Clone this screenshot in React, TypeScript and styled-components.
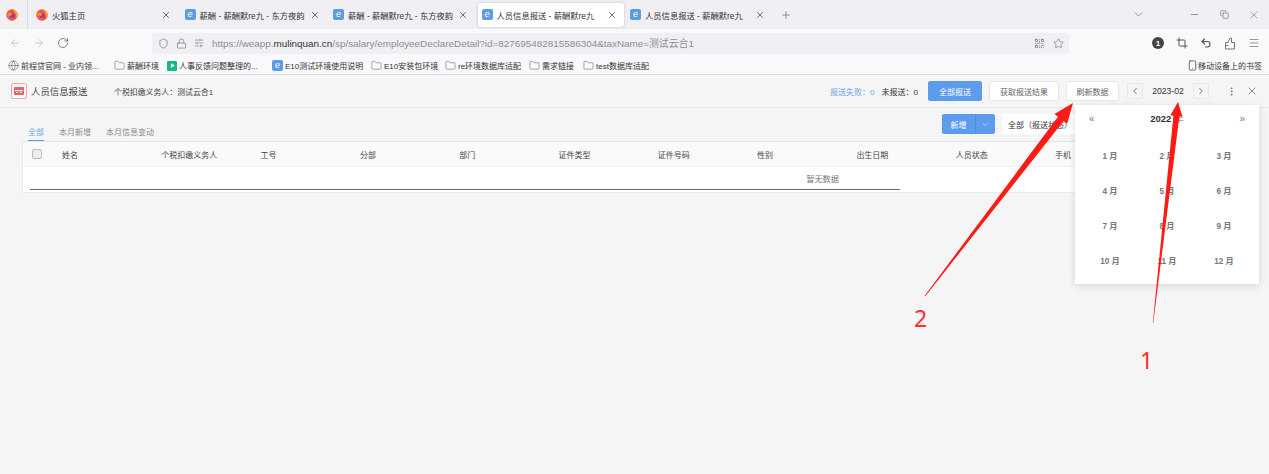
import React from "react";
import styled, { createGlobalStyle } from "styled-components";
import {
  ArrowLeft, ArrowRight, RotateCw, Shield, Lock, SlidersHorizontal, QrCode, Star,
  Crop, Undo2, Menu, Minus, X, Plus, ChevronDown, ChevronLeft, ChevronRight,
  Copy, Globe, Folder, Smartphone, MoreVertical, Play,
} from "lucide-react";

const Global = createGlobalStyle`
  html, body { margin: 0; padding: 0; background: #f5f5f5; }
  * { box-sizing: border-box; }
  body { font-family: "Liberation Sans", "Noto Sans CJK SC", sans-serif; }
`;

const Page = styled.div`
  position: relative;
  width: 1269px;
  height: 474px;
  overflow: hidden;
  background: #f5f5f5;
`;

/* ---------- browser chrome ---------- */
const TabStrip = styled.div`
  display: flex;
  align-items: center;
  height: 29px;
  background: #f0f0f4;
  color: #222;
`;
const FoxSlot = styled.div`
  display: flex;
  align-items: center;
  justify-content: center;
  width: 28px;
  height: 29px;
  margin-right: 4px;
  padding-right: 4px;
  border-right: 1px solid #dcdce0;
`;
const Tabs = styled.div`
  display: flex;
  gap: 2.5px;
`;
const TabItem = styled.div<{ $active?: boolean }>`
  display: flex;
  align-items: center;
  gap: 4px;
  width: 146px;
  height: 24px;
  padding: 0 7px 0 4px;
  border-radius: 3px;
  background: ${(p) => (p.$active ? "#fff" : "transparent")};
  box-shadow: ${(p) => (p.$active ? "0 0 3px rgba(0,0,0,.22)" : "none")};
`;
const TabLabel = styled.span`
  flex: 1;
  font-size: 8.3px;
  white-space: nowrap;
  color: #333;
`;
const EIcon = styled.span`
  display: inline-flex;
  flex: none;
  align-items: center;
  justify-content: center;
  width: 11px;
  height: 11px;
  border-radius: 2px;
  background: #5b9be8;
  color: #fff;
  font-size: 9px;
  font-style: italic;
  line-height: 1;
`;
const WindowControls = styled.div`
  display: flex;
  align-items: center;
  margin-left: auto;
  color: #666;
`;
const WinSlot = styled.div<{ $w: number }>`
  display: flex;
  justify-content: center;
  width: ${(p) => p.$w}px;
`;
const PlusSlot = styled.div`
  display: flex;
  margin-left: 8px;
  color: #555;
`;

const NavBar = styled.div`
  display: flex;
  align-items: center;
  height: 28px;
  padding-left: 9px;
  background: #f9f9fb;
`;
const NavButtons = styled.div`
  display: flex;
  align-items: center;
  gap: 12px;
  width: 143px;
`;
const NavIcon = styled.span<{ $dim?: boolean }>`
  display: inline-flex;
  color: ${(p) => (p.$dim ? "#b8b8bd" : "#555")};
`;
const Address = styled.div`
  display: flex;
  align-items: center;
  width: 917px;
  height: 21px;
  padding: 0 5px 0 6px;
  border-radius: 4px;
  background: #f0f0f4;
  color: #666;
`;
const AddressIcons = styled.div`
  display: flex;
  align-items: center;
  gap: 7px;
  width: 54px;
`;
const Url = styled.div`
  flex: 1;
  font-size: 9.9px;
  color: #8d8d92;
  white-space: nowrap;
`;
const UrlHost = styled.span`
  color: #333;
`;
const AddressEnd = styled.div`
  display: flex;
  align-items: center;
  gap: 8px;
`;
const NavRight = styled.div`
  display: flex;
  align-items: center;
  gap: 12px;
  margin-left: 83px;
  color: #555;
`;
const Badge = styled.span`
  display: inline-flex;
  align-items: center;
  justify-content: center;
  width: 12px;
  height: 12px;
  border-radius: 50%;
  background: #444;
  color: #fff;
  font-size: 8px;
  font-weight: 700;
`;

const Bookmarks = styled.div`
  display: flex;
  align-items: center;
  height: 18px;
  padding-left: 8px;
  background: #f9f9fb;
  border-bottom: 1px solid #dcdcdf;
`;
const Mark = styled.div<{ $w: number }>`
  display: flex;
  flex: none;
  align-items: center;
  gap: 2px;
  width: ${(p) => p.$w}px;
  font-size: 8px;
  color: #333;
  white-space: nowrap;
`;
const MarkIcon = styled.span`
  display: inline-flex;
  flex: none;
  color: #555;
`;
const GreenIcon = styled.span`
  display: inline-flex;
  flex: none;
  align-items: center;
  justify-content: center;
  width: 10px;
  height: 10px;
  border-radius: 1px;
  background: #12b886;
  color: #fff;
`;
const MobileMark = styled.div`
  display: flex;
  align-items: center;
  margin-left: auto;
  padding-right: 7px;
  font-size: 8px;
  color: #333;
`;

/* ---------- application ---------- */
const AppHeader = styled.header`
  display: flex;
  align-items: center;
  height: 33px;
  padding: 0 11px;
  border-bottom: 1px solid #e6e6e6;
  background: #f5f5f5;
`;
const LogoBox = styled.div`
  display: flex;
  align-items: center;
  justify-content: center;
  width: 16px;
  height: 16px;
  border: 1px solid #f9a3a3;
  border-radius: 2px;
  background: #fff;
`;
const Title = styled.div`
  margin-left: 4px;
  width: 83px;
  font-size: 9.4px;
  color: #444;
`;
const Payer = styled.div`
  font-size: 7.9px;
  color: #444;
`;
const HeaderRight = styled.div`
  display: flex;
  align-items: center;
  margin-left: auto;
`;
const Stat = styled.span<{ $blue?: boolean; $mr: number }>`
  margin-right: ${(p) => p.$mr}px;
  font-size: 8px;
  color: ${(p) => (p.$blue ? "#6fa5ec" : "#333")};
  white-space: nowrap;
`;
const Btn = styled.button<{ $primary?: boolean; $w: number; $mr?: number }>`
  display: inline-flex;
  align-items: center;
  justify-content: center;
  width: ${(p) => p.$w}px;
  height: 20px;
  margin-right: ${(p) => p.$mr ?? 0}px;
  padding: 0;
  border: 1px solid ${(p) => (p.$primary ? "#5d9cec" : "#e8e8e8")};
  border-radius: 2px;
  background: ${(p) => (p.$primary ? "#5d9cec" : "#fff")};
  color: ${(p) => (p.$primary ? "#fff" : "#666")};
  font-family: inherit;
  font-size: 8px;
`;
const PageBtn = styled.button`
  display: inline-flex;
  align-items: center;
  justify-content: center;
  width: 16px;
  height: 16px;
  padding: 0;
  border: 1px solid #e8e8e8;
  border-radius: 2px;
  background: #f5f5f5;
  color: #555;
`;
const DateText = styled.span`
  width: 50px;
  text-align: center;
  font-size: 8.6px;
  color: #333;
`;
const HeaderTools = styled.div`
  display: flex;
  align-items: center;
  gap: 9px;
  margin-left: 17px;
  color: #555;
`;

const Content = styled.main`
  padding: 0 22px;
`;
const ToolRow = styled.div`
  display: flex;
  justify-content: space-between;
  height: 33px;
`;
const SubTabs = styled.div`
  display: flex;
  align-self: flex-end;
  gap: 15px;
  padding-left: 6px;
`;
const SubTab = styled.div<{ $active?: boolean }>`
  height: 16px;
  border-bottom: 1px solid ${(p) => (p.$active ? "#5d9cec" : "transparent")};
  color: ${(p) => (p.$active ? "#6fa5ec" : "#8c8c8c")};
  font-size: 8px;
  line-height: 15px;
`;
const Actions = styled.div`
  display: flex;
  gap: 7px;
  padding-top: 6px;
`;
const Split = styled.div`
  display: flex;
  width: 53px;
  height: 20px;
  border-radius: 2px;
  background: #5d9cec;
  color: #fff;
  font-size: 8px;
`;
const SplitMain = styled.div`
  display: flex;
  align-items: center;
  justify-content: center;
  width: 34px;
  border-right: 1px solid #4f8cdc;
`;
const SplitArrow = styled.div`
  display: flex;
  flex: 1;
  align-items: center;
  justify-content: center;
`;
const SelectBox = styled.div`
  display: flex;
  align-items: center;
  width: 245px;
  height: 20px;
  padding-left: 6px;
  background: #fff;
  color: #333;
  font-size: 8px;
`;

const Table = styled.div`
  width: 1225px;
  border: 1px solid #ececec;
  border-top-color: #e4e4e4;
  background: #fff;
`;
const HeadRow = styled.div`
  display: grid;
  grid-template-columns: 39px repeat(11, 99.3px);
  align-items: center;
  height: 25px;
  background: #fafafa;
  border-bottom: 1px solid #eee;
  color: #444;
  font-size: 8px;
  overflow: hidden;
`;
const CheckCell = styled.div`
  padding-left: 9px;
`;
const Check = styled.div`
  width: 10px;
  height: 10px;
  border: 1px solid #bbb;
  border-radius: 2px;
  background: #eee;
`;
const EmptyRow = styled.div`
  height: 25px;
  padding-left: 7px;
`;
const EmptyInner = styled.div`
  display: flex;
  align-items: center;
  justify-content: flex-end;
  width: 870px;
  height: 23px;
  padding-right: 61px;
  border-bottom: 1px solid #6a6a6a;
  color: #777;
  font-size: 8.2px;
`;

/* ---------- overlays ---------- */
const Popover = styled.div`
  position: absolute;
  left: 1075px;
  top: 105px;
  width: 184px;
  height: 179px;
  background: #fff;
  box-shadow: 0 2px 8px rgba(0, 0, 0, 0.13);
`;
const PopHead = styled.div`
  display: flex;
  align-items: center;
  justify-content: space-between;
  height: 26px;
  padding: 0 14px;
  color: #777;
  font-size: 10px;
`;
const PopYear = styled.span`
  color: #333;
  font-size: 9.5px;
  font-weight: 700;
`;
const PopYearUnit = styled.span`
  color: #999;
  font-weight: 400;
  margin-left: 3px;
`;
const Months = styled.div`
  display: grid;
  grid-template-columns: repeat(3, 57px);
  grid-auto-rows: 35px;
  justify-content: center;
  padding-top: 6px;
  color: #777;
  font-size: 8.2px;
  font-weight: 600;
`;
const Month = styled.div`
  display: flex;
  align-items: center;
  justify-content: center;
`;
const Annotations = styled.svg`
  position: absolute;
  left: 0;
  top: 0;
  pointer-events: none;
`;
const Num = styled.div<{ $x: number; $y: number }>`
  position: absolute;
  left: ${(p) => p.$x}px;
  top: ${(p) => p.$y}px;
  color: #ff2d2d;
  font-family: "Noto Sans", sans-serif;
  font-size: 23px;
  line-height: 1;
`;

const Fox = () => (
  <svg width="12" height="12" viewBox="0 0 24 24" style={{ flex: "none" }}>
    <circle cx="12" cy="12" r="11.5" fill="#f4523b" />
    <path d="M12 .5A11.5 11.5 0 0 1 23.5 12c0 3-1 5.500-3 7.500 1-7-2-14-8.500-19z" fill="#ffa92b" />
    <circle cx="12" cy="13" r="5.500" fill="#8d3fc4" />
    <path d="M3 8c3-2 8-1.500 9 1.500 1 3-2.500 5-6 4-1 3.500 3 7 8 6-6 2.500-13-4-11-11.500z" fill="#ff8a2a" />
  </svg>
);

const ExtensionIcon = () => (
  <svg width="12" height="13" viewBox="0 0 12 13" fill="none" stroke="currentColor" strokeWidth="0.8">
    <path d="M1.500 5.500h2.500L6 1.200h1.500v4.300h3v6.500h-9z" />
    <path d="M1.500 8.500h3" />
  </svg>
);

const tabData = [
  { t: "薪酬 - 薪酬默re九 - 东方夜韵" },
  { t: "薪酬 - 薪酬默re九 - 东方夜韵" },
  { t: "人员信息报送 - 薪酬默re九", active: true },
  { t: "人员信息报送 - 薪酬默re九" },
];
const columns = ["姓名", "个税扣缴义务人", "工号", "分部", "部门", "证件类型", "证件号码", "性别", "出生日期", "人员状态", "手机"];
const months = Array.from({ length: 12 }, (_, i) => `${i + 1} 月`);
const marks = [
  { w: 53, t: "薪酬环境", i: "f" },
  { w: 105, t: "人事反馈问题整理的...", i: "g" },
  { w: 99, t: "E10测试环境使用说明", i: "e" },
  { w: 74, t: "E10安装包环境", i: "f" },
  { w: 84, t: "re环境数据库适配", i: "f" },
  { w: 54, t: "需求链接", i: "f" },
  { w: 70, t: "test数据库适配", i: "f" },
];

export default function App() {
  return (
    <Page>
      <Global />
      <TabStrip>
        <FoxSlot><Fox /></FoxSlot>
        <Tabs>
          <TabItem>
            <Fox />
            <TabLabel>火狐主页</TabLabel>
            <X size={10} strokeWidth={1.5} />
          </TabItem>
          {tabData.map((d, i) => (
            <TabItem key={i} $active={d.active}>
              <EIcon>e</EIcon>
              <TabLabel>{d.t}</TabLabel>
              <X size={10} strokeWidth={1.5} />
            </TabItem>
          ))}
        </Tabs>
        <PlusSlot><Plus size={12} strokeWidth={1.2} /></PlusSlot>
        <WindowControls>
          <WinSlot $w={82}><ChevronDown size={13} strokeWidth={1.2} /></WinSlot>
          <WinSlot $w={30}><Minus size={11} strokeWidth={1.4} /></WinSlot>
          <WinSlot $w={30}><Copy size={9} strokeWidth={1.6} /></WinSlot>
          <WinSlot $w={30}><X size={12} strokeWidth={1.1} /></WinSlot>
        </WindowControls>
      </TabStrip>

      <NavBar>
        <NavButtons>
          <NavIcon $dim><ArrowLeft size={12} strokeWidth={1.4} /></NavIcon>
          <NavIcon $dim><ArrowRight size={12} strokeWidth={1.4} /></NavIcon>
          <NavIcon><RotateCw size={12} strokeWidth={1.4} /></NavIcon>
        </NavButtons>
        <Address>
          <AddressIcons>
            <Shield size={11} strokeWidth={1.3} />
            <Lock size={11} strokeWidth={1.3} />
            <SlidersHorizontal size={10} strokeWidth={1.3} />
          </AddressIcons>
          <Url>
            https://weapp.<UrlHost>mulinquan.cn</UrlHost>/sp/salary/employeeDeclareDetail?id=827695482815586304&amp;taxName=测试云合1
          </Url>
          <AddressEnd>
            <QrCode size={11} strokeWidth={1.5} />
            <Star size={11} strokeWidth={1.3} />
          </AddressEnd>
        </Address>
        <NavRight>
          <Badge>1</Badge>
          <Crop size={12} strokeWidth={2} />
          <Undo2 size={12} strokeWidth={2.2} />
          <ExtensionIcon />
          <Menu size={12} strokeWidth={1.2} />
        </NavRight>
      </NavBar>

      <Bookmarks>
        <Mark $w={106}>
          <MarkIcon><Globe size={11} strokeWidth={1.2} /></MarkIcon>
          前程贷官网 - 业内领...
        </Mark>
        {marks.map((m) => (
          <Mark key={m.t} $w={m.w}>
            {m.i === "f" && <MarkIcon><Folder size={11} strokeWidth={1.1} /></MarkIcon>}
            {m.i === "g" && <GreenIcon><Play size={5} fill="#fff" /></GreenIcon>}
            {m.i === "e" && <EIcon>e</EIcon>}
            {m.t}
          </Mark>
        ))}
        <MobileMark>
          <Smartphone size={11} strokeWidth={1.5} />
          移动设备上的书签
        </MobileMark>
      </Bookmarks>

      <AppHeader>
        <LogoBox>
          <svg width="10" height="8" viewBox="0 0 10 8">
            <rect width="10" height="8" rx="1" fill="#f25c5c" />
            <rect x="1" y="3" width="8" height="1.2" fill="#fff" />
            <rect x="2" y="5" width="2" height="1" fill="#fff" />
            <rect x="6" y="5" width="2" height="1" fill="#fff" />
          </svg>
        </LogoBox>
        <Title>人员信息报送</Title>
        <Payer>个税扣缴义务人：测试云合1</Payer>
        <HeaderRight>
          <Stat $blue $mr={7}>报送失败：0</Stat>
          <Stat $mr={10}>未报送：0</Stat>
          <Btn $primary $w={54} $mr={7}>全部报送</Btn>
          <Btn $w={70} $mr={7}>获取报送结果</Btn>
          <Btn $w={53} $mr={8}>刷新数据</Btn>
          <PageBtn><ChevronLeft size={10} /></PageBtn>
          <DateText>2023-02</DateText>
          <PageBtn><ChevronRight size={10} /></PageBtn>
          <HeaderTools>
            <MoreVertical size={11} strokeWidth={1.4} />
            <X size={12} strokeWidth={1.3} />
          </HeaderTools>
        </HeaderRight>
      </AppHeader>

      <Content>
        <ToolRow>
          <SubTabs>
            <SubTab $active>全部</SubTab>
            <SubTab>本月新增</SubTab>
            <SubTab>本月信息变动</SubTab>
          </SubTabs>
          <Actions>
            <Split>
              <SplitMain>新增</SplitMain>
              <SplitArrow><ChevronDown size={9} strokeWidth={1.4} /></SplitArrow>
            </Split>
            <SelectBox>全部（报送状态）</SelectBox>
          </Actions>
        </ToolRow>
        <Table>
          <HeadRow>
            <CheckCell><Check /></CheckCell>
            {columns.map((c) => <div key={c}>{c}</div>)}
          </HeadRow>
          <EmptyRow>
            <EmptyInner>暂无数据</EmptyInner>
          </EmptyRow>
        </Table>
      </Content>

      <Popover>
        <PopHead>
          <span>«</span>
          <PopYear>2022<PopYearUnit>年</PopYearUnit></PopYear>
          <span>»</span>
        </PopHead>
        <Months>
          {months.map((m) => <Month key={m}>{m}</Month>)}
        </Months>
      </Popover>

      <Annotations width="1269" height="474" viewBox="0 0 1269 474">
        <polygon
          points="1178,102 1182.4,116.7 1179.4,116.3 1153.2,323 1152.8,323 1173.4,115.7 1170.4,115.3"
          fill="#ff1a14"
        />
        <polygon
          points="1073,103 1067.1,123.7 1063.6,120.9 925.3,296.3 924.7,295.7 1058,116.7 1054.5,114"
          fill="#ff1a14"
        />
      </Annotations>
      <Num $x={914} $y={307}>2</Num>
      <Num $x={1140} $y={349}>1</Num>
    </Page>
  );
}
